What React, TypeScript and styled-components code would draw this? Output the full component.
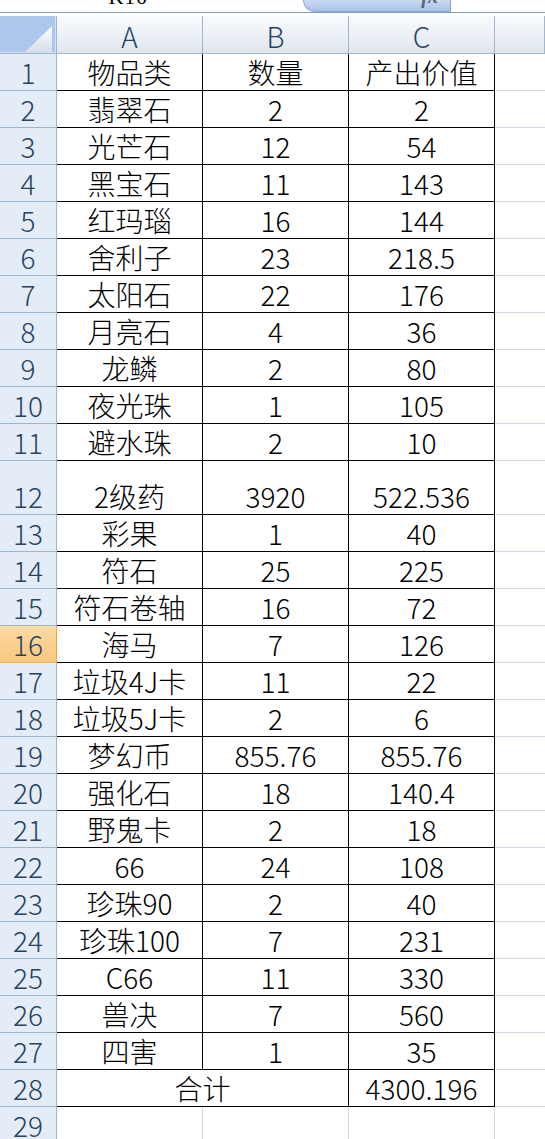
import React from "react";
import styled, { createGlobalStyle } from "styled-components";

const Global = createGlobalStyle`
  html, body { margin: 0; padding: 0; background: #ffffff; overflow: hidden; }
  body { font-family: "Noto Sans CJK SC", "Noto Sans", sans-serif; }
`;

const COL_W = 146;
const HEAD_W = 57;
const GRID = "#d0d7e5";
const HEAD_LINE = "#9eb6ce";

const Page = styled.div`
  width: 545px;
  height: 1139px;
  overflow: hidden;
  background: #fff;
`;

const TopBar = styled.div`
  display: flex;
  height: 12px;
  overflow: hidden;
  background: #fff;
`;

const NameBox = styled.div`
  width: 256px;
  height: 12px;
  overflow: hidden;
  display: flex;
  justify-content: center;
`;

const NameText = styled.span`
  display: block;
  font-family: "Liberation Serif", serif;
  font-size: 21px;
  line-height: 20px;
  margin-top: -13px;
  color: #000;
  letter-spacing: 1px;
`;

const Pill = styled.div`
  margin-left: 47px;
  width: 148px;
  height: 12px;
  box-sizing: border-box;
  border-bottom-left-radius: 16px;
  border: 1px solid #8faad0;
  border-top: none;
  background: linear-gradient(#c9daf1, #a9c3e6);
  display: flex;
  justify-content: flex-end;
  overflow: hidden;
`;

const FxText = styled.span`
  display: block;
  font-family: "Liberation Serif", serif;
  font-style: italic;
  font-weight: bold;
  font-size: 20px;
  line-height: 20px;
  margin-top: -14px;
  margin-right: 12px;
  color: #5a6472;
`;

const BarLine = styled.div`
  height: 1px;
  background: #7f9fc6;
`;

const Gap = styled.div`
  height: 3px;
  background: #fff;
`;

const Row = styled.div<{ $h: number }>`
  display: flex;
  height: ${(p) => p.$h}px;
`;

const Corner = styled.div`
  width: ${HEAD_W}px;
  box-sizing: border-box;
  border-right: 1px solid ${HEAD_LINE};
  border-bottom: 1px solid ${HEAD_LINE};
  background: #adc7ec;
  box-shadow: inset -1px -1px 0 #d3e1f4;
  display: flex;
  align-items: flex-end;
  justify-content: flex-end;
`;

const ColHead = styled.div<{ $w?: number }>`
  ${(p) => (p.$w ? `width: ${p.$w}px;` : "flex: 1;")}
  box-sizing: border-box;
  border-right: 1px solid ${HEAD_LINE};
  border-bottom: 1px solid ${HEAD_LINE};
  background: linear-gradient(#f9fbfd, #dfe6ef);
  display: flex;
  align-items: center;
  justify-content: center;
  font-size: 28px;
  font-weight: 300;
  color: #27435f;
  padding-top: 3px;
`;

const RowHead = styled.div<{ $active?: boolean }>`
  width: ${HEAD_W}px;
  flex: none;
  box-sizing: border-box;
  border-right: 1px solid ${(p) => (p.$active ? "#f2a23c" : HEAD_LINE)};
  border-bottom: 1px solid ${(p) => (p.$active ? "#f2b25e" : HEAD_LINE)};
  background: ${(p) => (p.$active ? "linear-gradient(#fcdba3, #f8c77e)" : "#e4ecf7")};
  color: #27435f;
  font-size: 28px;
  font-weight: 300;
  line-height: 35px;
  display: flex;
  align-items: flex-end;
  justify-content: center;
`;

const Cell = styled.div<{ $span?: number; $strong?: boolean }>`
  width: ${(p) => (p.$span || 1) * COL_W}px;
  flex: none;
  box-sizing: border-box;
  border-right: 1px solid ${(p) => (p.$strong ? "#000" : GRID)};
  border-bottom: 1px solid ${(p) => (p.$strong ? "#000" : GRID)};
  color: #000;
  font-size: 28px;
  font-weight: 300;
  line-height: 35px;
  display: flex;
  align-items: flex-end;
  justify-content: center;
  white-space: nowrap;
`;

const Rest = styled.div`
  flex: 1;
  box-sizing: border-box;
  border-bottom: 1px solid ${GRID};
`;

const data: [string, string, string][] = [
  ["物品类", "数量", "产出价值"],
  ["翡翠石", "2", "2"],
  ["光芒石", "12", "54"],
  ["黑宝石", "11", "143"],
  ["红玛瑙", "16", "144"],
  ["舍利子", "23", "218.5"],
  ["太阳石", "22", "176"],
  ["月亮石", "4", "36"],
  ["龙鳞", "2", "80"],
  ["夜光珠", "1", "105"],
  ["避水珠", "2", "10"],
  ["2级药", "3920", "522.536"],
  ["彩果", "1", "40"],
  ["符石", "25", "225"],
  ["符石卷轴", "16", "72"],
  ["海马", "7", "126"],
  ["垃圾4J卡", "11", "22"],
  ["垃圾5J卡", "2", "6"],
  ["梦幻币", "855.76", "855.76"],
  ["强化石", "18", "140.4"],
  ["野鬼卡", "2", "18"],
  ["66", "24", "108"],
  ["珍珠90", "2", "40"],
  ["珍珠100", "7", "231"],
  ["C66", "11", "330"],
  ["兽决", "7", "560"],
  ["四害", "1", "35"],
];

const ACTIVE_ROW = 16;

const rowHeight = (n: number) => (n === 12 ? 54 : 37);

export default function App() {
  return (
    <Page>
      <Global />
      <TopBar>
        <NameBox>
          <NameText>K16</NameText>
        </NameBox>
        <Pill>
          <FxText>fx</FxText>
        </Pill>
      </TopBar>
      <BarLine />
      <Gap />
      <Row $h={38}>
        <Corner>
          <svg width="32" height="30" viewBox="0 0 32 30">
            <defs>
              <linearGradient id="tri" x1="0" y1="0" x2="0" y2="1">
                <stop offset="0" stopColor="#ffffff" />
                <stop offset="1" stopColor="#d4dce8" />
              </linearGradient>
            </defs>
            <polygon points="28,3 28,30 0,30" fill="url(#tri)" />
          </svg>
        </Corner>
        <ColHead $w={COL_W}>A</ColHead>
        <ColHead $w={COL_W}>B</ColHead>
        <ColHead $w={COL_W}>C</ColHead>
        <ColHead />
      </Row>
      {data.map((r, i) => {
        const n = i + 1;
        return (
          <Row key={n} $h={rowHeight(n)}>
            <RowHead $active={n === ACTIVE_ROW}>{n}</RowHead>
            <Cell $strong>{r[0]}</Cell>
            <Cell $strong>{r[1]}</Cell>
            <Cell $strong>{r[2]}</Cell>
            <Rest />
          </Row>
        );
      })}
      <Row $h={37}>
        <RowHead>28</RowHead>
        <Cell $strong $span={2}>合计</Cell>
        <Cell $strong>4300.196</Cell>
        <Rest />
      </Row>
      <Row $h={37}>
        <RowHead>29</RowHead>
        <Cell />
        <Cell />
        <Cell />
        <Rest />
      </Row>
    </Page>
  );
}
